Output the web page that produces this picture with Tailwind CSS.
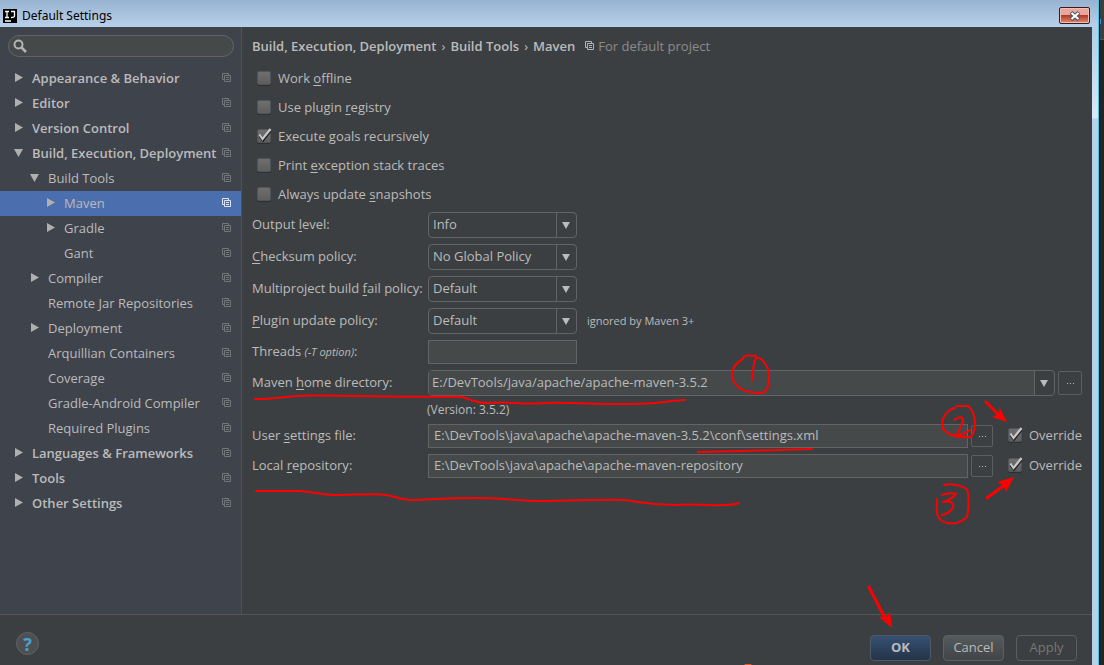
<!DOCTYPE html>
<html lang="en">
<head>
<meta charset="utf-8">
<title>Default Settings</title>
<script src="https://cdn.jsdelivr.net/npm/@tailwindcss/browser@4"></script>
</head>
<body class="flex h-screen overflow-hidden bg-[#232425] font-['Open_Sans','Noto_Sans',sans-serif] text-[13px] leading-4 text-[#bbbbbb]">
<svg class="hidden">
  <symbol id="copy" viewBox="0 0 9 9"><path d="M2.500 6.500H.5V.5H6.500V2.500M2.500 2.500H8.500V8.500H2.500ZM4 4.500H7M4 6.500H7" fill="none" stroke="currentColor"/></symbol>
  <symbol id="right" viewBox="0 0 8 9"><path d="M0 0L8 4.500L0 9Z" fill="currentColor"/></symbol>
  <symbol id="down" viewBox="0 0 9 8"><path d="M0 0H9L4.500 8Z" fill="currentColor"/></symbol>
  <symbol id="tick" viewBox="0 0 16 16"><path d="M4 8L7 12L14 3" fill="none" stroke="#222" stroke-width="3"/><path d="M3.500 6.500L6.500 11L14.500 1" fill="none" stroke="#c8c8c8" stroke-width="2.200"/></symbol>
</svg>

<div class="flex min-w-0 flex-1 flex-col">
  <header class="flex h-[27px] shrink-0 items-center bg-linear-to-b from-[#98b3d1] to-[#b8d0ea] pr-2 pl-[3px] text-black">
    <svg class="mt-1 h-3.5 w-3.5" viewBox="0 0 14 14"><path fill="#000" d="M0 0H14V14H0Z"/><path d="M2 2.500H6M4 2.500V8M2 8.500H6M8 2.500H11.500V7Q11.500 8.500 8 8.500M2 12H8" fill="none" stroke="#fff" stroke-width="1.300"/></svg>
    <h1 class="mt-1 ml-[5px] flex-1 font-['Noto_Sans',sans-serif] text-[12px]">Default Settings</h1>
    <button aria-label="Close" class="mt-1 grid h-[17px] w-[31px] place-items-center rounded-xs border border-[#3c1820] bg-linear-to-b from-[#e9a79c] from-45% via-[#b5382a] via-50% to-[#dc8b74] shadow-[inset_0_0_0_1px_#f0c0b4]">
      <svg class="h-2.5 w-3" viewBox="0 0 12 10"><path d="M2 1.500L10 8.500M10 1.500L2 8.500" stroke="#4b4f5c" stroke-width="4"/><path d="M2.500 2L9.500 8M9.500 2L2.500 8" stroke="#fff" stroke-width="2.200"/></svg>
    </button>
  </header>

  <div class="flex min-h-0 flex-1">
    <div class="flex min-w-0 flex-1 flex-col bg-[#3c3f41]">
      <div class="flex min-h-0 flex-1 border-b border-[#555555]">
        <aside class="w-[242px] shrink-0 border-r border-[#515151] bg-[#3f434c] pt-2">
          <label class="mr-[7px] mb-[9px] ml-2 flex h-[22px] items-center rounded-full border border-[#646464] bg-[#45494a] pl-1">
            <svg class="h-3.5 w-3.5 shrink-0" viewBox="0 0 14 14" fill="none" stroke="#b4b4b4"><circle cx="5.500" cy="5.500" r="4" stroke-width="2"/><path d="M8.500 8.500L13 13" stroke-width="2.500"/></svg>
            <input type="search" aria-label="Search settings" class="w-full bg-transparent px-1 outline-none">
          </label>
          <nav class="text-[#bbbbbb]">
            <a href="#" class="flex h-[25px] items-center pr-[10px] pb-0.5 pl-[15px] font-semibold"><svg class="mr-[9px] h-[9px] w-2 shrink-0 text-[#b0b0b0]"><use href="#right"/></svg><span class="flex-1">Appearance &amp; Behavior</span><svg class="h-[9px] w-[9px] text-[#72777b]"><use href="#copy"/></svg></a>
            <a href="#" class="flex h-[25px] items-center pr-[10px] pb-0.5 pl-[15px] font-semibold"><svg class="mr-[9px] h-[9px] w-2 shrink-0 text-[#b0b0b0]"><use href="#right"/></svg><span class="flex-1">Editor</span><svg class="h-[9px] w-[9px] text-[#72777b]"><use href="#copy"/></svg></a>
            <a href="#" class="flex h-[25px] items-center pr-[10px] pb-0.5 pl-[15px] font-semibold"><svg class="mr-[9px] h-[9px] w-2 shrink-0 text-[#b0b0b0]"><use href="#right"/></svg><span class="flex-1">Version Control</span><svg class="h-[9px] w-[9px] text-[#72777b]"><use href="#copy"/></svg></a>
            <a href="#" class="flex h-[25px] items-center pr-[10px] pb-0.5 pl-[14px] font-semibold"><svg class="mr-[9px] h-2 w-[9px] shrink-0 text-[#b0b0b0]"><use href="#down"/></svg><span class="flex-1 whitespace-nowrap">Build, Execution, Deployment</span><svg class="h-[9px] w-[9px] text-[#72777b]"><use href="#copy"/></svg></a>
            <a href="#" class="flex h-[25px] items-center pr-[10px] pb-0.5 pl-[30px]"><svg class="mr-[9px] h-2 w-[9px] shrink-0 text-[#b0b0b0]"><use href="#down"/></svg><span class="flex-1">Build Tools</span><svg class="h-[9px] w-[9px] text-[#72777b]"><use href="#copy"/></svg></a>
            <a href="#" aria-current="page" class="flex h-[25px] items-center bg-[#4b6eaf] pr-[10px] pb-0.5 pl-[47px]"><svg class="mr-[9px] h-[9px] w-2 shrink-0 text-[#b0b0b0]"><use href="#right"/></svg><span class="flex-1">Maven</span><svg class="h-[9px] w-[9px] text-[#dfe6ee]"><use href="#copy"/></svg></a>
            <a href="#" class="flex h-[25px] items-center pr-[10px] pb-0.5 pl-[47px]"><svg class="mr-[9px] h-[9px] w-2 shrink-0 text-[#b0b0b0]"><use href="#right"/></svg><span class="flex-1">Gradle</span><svg class="h-[9px] w-[9px] text-[#72777b]"><use href="#copy"/></svg></a>
            <a href="#" class="flex h-[25px] items-center pr-[10px] pb-0.5 pl-16"><span class="flex-1">Gant</span><svg class="h-[9px] w-[9px] text-[#72777b]"><use href="#copy"/></svg></a>
            <a href="#" class="flex h-[25px] items-center pr-[10px] pb-0.5 pl-[31px]"><svg class="mr-[9px] h-[9px] w-2 shrink-0 text-[#b0b0b0]"><use href="#right"/></svg><span class="flex-1">Compiler</span><svg class="h-[9px] w-[9px] text-[#72777b]"><use href="#copy"/></svg></a>
            <a href="#" class="flex h-[25px] items-center pr-[10px] pb-0.5 pl-12"><span class="flex-1">Remote Jar Repositories</span><svg class="h-[9px] w-[9px] text-[#72777b]"><use href="#copy"/></svg></a>
            <a href="#" class="flex h-[25px] items-center pr-[10px] pb-0.5 pl-[31px]"><svg class="mr-[9px] h-[9px] w-2 shrink-0 text-[#b0b0b0]"><use href="#right"/></svg><span class="flex-1">Deployment</span><svg class="h-[9px] w-[9px] text-[#72777b]"><use href="#copy"/></svg></a>
            <a href="#" class="flex h-[25px] items-center pr-[10px] pb-0.5 pl-12"><span class="flex-1">Arquillian Containers</span><svg class="h-[9px] w-[9px] text-[#72777b]"><use href="#copy"/></svg></a>
            <a href="#" class="flex h-[25px] items-center pr-[10px] pb-0.5 pl-12"><span class="flex-1">Coverage</span><svg class="h-[9px] w-[9px] text-[#72777b]"><use href="#copy"/></svg></a>
            <a href="#" class="flex h-[25px] items-center pr-[10px] pb-0.5 pl-12"><span class="flex-1">Gradle-Android Compiler</span><svg class="h-[9px] w-[9px] text-[#72777b]"><use href="#copy"/></svg></a>
            <a href="#" class="flex h-[25px] items-center pr-[10px] pb-0.5 pl-12"><span class="flex-1">Required Plugins</span><svg class="h-[9px] w-[9px] text-[#72777b]"><use href="#copy"/></svg></a>
            <a href="#" class="flex h-[25px] items-center pr-[10px] pb-0.5 pl-[15px] font-semibold"><svg class="mr-[9px] h-[9px] w-2 shrink-0 text-[#b0b0b0]"><use href="#right"/></svg><span class="flex-1">Languages &amp; Frameworks</span><svg class="h-[9px] w-[9px] text-[#72777b]"><use href="#copy"/></svg></a>
            <a href="#" class="flex h-[25px] items-center pr-[10px] pb-0.5 pl-[15px] font-semibold"><svg class="mr-[9px] h-[9px] w-2 shrink-0 text-[#b0b0b0]"><use href="#right"/></svg><span class="flex-1">Tools</span><svg class="h-[9px] w-[9px] text-[#72777b]"><use href="#copy"/></svg></a>
            <a href="#" class="flex h-[25px] items-center pr-[10px] pb-0.5 pl-[15px] font-semibold"><svg class="mr-[9px] h-[9px] w-2 shrink-0 text-[#b0b0b0]"><use href="#right"/></svg><span class="flex-1">Other Settings</span><svg class="h-[9px] w-[9px] text-[#72777b]"><use href="#copy"/></svg></a>
          </nav>
        </aside>

        <main class="min-w-0 flex-1 px-[10px]">
          <div class="flex h-9 items-center pt-px whitespace-nowrap">
            <h2 class="flex gap-[5px] font-semibold"><span>Build, Execution, Deployment</span><span class="font-normal">›</span><span>Build Tools</span><span class="font-normal">›</span><span>Maven</span></h2>
            <svg class="mr-1 ml-2.5 h-[9px] w-[9px] text-[#b0b4b6]"><use href="#copy"/></svg>
            <span class="text-[#8c8c8c]">For default project</span>
          </div>

          <div class="flex flex-col items-start pl-1">
            <label class="flex h-[29px] items-center gap-1.5"><span class="grid h-4 w-4 place-items-center"><input type="checkbox" class="h-3.5 w-3.5 appearance-none rounded-xs border border-[#525557] bg-linear-to-b from-[#6e6e6e] to-[#5e5e5e] shadow-[0_1px_0_#2c2e2f]"></span><span>Work <u class="underline-offset-2">o</u>ffline</span></label>
            <label class="flex h-[29px] items-center gap-1.5"><span class="grid h-4 w-4 place-items-center"><input type="checkbox" class="h-3.5 w-3.5 appearance-none rounded-xs border border-[#525557] bg-linear-to-b from-[#6e6e6e] to-[#5e5e5e] shadow-[0_1px_0_#2c2e2f]"></span><span>Use plugin <u class="underline-offset-2">r</u>egistry</span></label>
            <label class="flex h-[29px] items-center gap-1.5"><span class="grid h-4 w-4 place-items-center"><input type="checkbox" checked class="peer col-start-1 row-start-1 h-3.5 w-3.5 appearance-none rounded-xs border border-[#525557] bg-linear-to-b from-[#6e6e6e] to-[#5e5e5e] shadow-[0_1px_0_#2c2e2f]"><svg class="pointer-events-none invisible col-start-1 row-start-1 h-4 w-4 peer-checked:visible"><use href="#tick"/></svg></span><span>Execute <u class="underline-offset-2">g</u>oals recursively</span></label>
            <label class="flex h-[29px] items-center gap-1.5"><span class="grid h-4 w-4 place-items-center"><input type="checkbox" class="h-3.5 w-3.5 appearance-none rounded-xs border border-[#525557] bg-linear-to-b from-[#6e6e6e] to-[#5e5e5e] shadow-[0_1px_0_#2c2e2f]"></span><span>Print <u class="underline-offset-2">e</u>xception stack traces</span></label>
            <label class="flex h-[29px] items-center gap-1.5"><span class="grid h-4 w-4 place-items-center"><input type="checkbox" class="h-3.5 w-3.5 appearance-none rounded-xs border border-[#525557] bg-linear-to-b from-[#6e6e6e] to-[#5e5e5e] shadow-[0_1px_0_#2c2e2f]"></span><span>Always update <u class="underline-offset-2">s</u>napshots</span></label>
          </div>

          <div class="mt-1 grid grid-cols-[176px_minmax(0,1fr)] items-center gap-y-1.5 whitespace-nowrap [&_input]:pb-0.5 [&_select]:pb-0.5 [&>label]:pb-0.5">
            <label for="level">Output <u class="underline-offset-2">l</u>evel:</label>
            <div class="flex h-[26px] w-[149px] items-stretch rounded-sm border border-[#646464]">
              <select id="level" class="w-[127px] appearance-none pl-1 outline-none"><option>Info</option></select><span class="grid flex-1 place-items-center border-l border-[#646464] pr-px"><svg class="h-[7px] w-2"><use href="#down"/></svg></span>
            </div>
            <label for="checksum"><u class="underline-offset-2">C</u>hecksum policy:</label>
            <div class="flex h-[26px] w-[149px] items-stretch rounded-sm border border-[#646464]">
              <select id="checksum" class="w-[127px] appearance-none pl-1 outline-none"><option>No Global Policy</option></select><span class="grid flex-1 place-items-center border-l border-[#646464] pr-px"><svg class="h-[7px] w-2"><use href="#down"/></svg></span>
            </div>
            <label for="fail">Multiproject build <u class="underline-offset-2">f</u>ail policy:</label>
            <div class="flex h-[26px] w-[149px] items-stretch rounded-sm border border-[#646464]">
              <select id="fail" class="w-[127px] appearance-none pl-1 outline-none"><option>Default</option></select><span class="grid flex-1 place-items-center border-l border-[#646464] pr-px"><svg class="h-[7px] w-2"><use href="#down"/></svg></span>
            </div>
            <label for="plugin"><u class="underline-offset-2">P</u>lugin update policy:</label>
            <div class="flex items-center gap-2.5">
              <div class="flex h-[26px] w-[149px] items-stretch rounded-sm border border-[#646464]">
                <select id="plugin" class="w-[127px] appearance-none pl-1 outline-none"><option>Default</option></select><span class="grid flex-1 place-items-center border-l border-[#646464] pr-px"><svg class="h-[7px] w-2"><use href="#down"/></svg></span>
              </div>
              <span class="text-[11px]">ignored by Maven 3+</span>
            </div>
            <label for="threads">Threads <i class="text-[11px]">(-T option)</i>:</label>
            <input id="threads" type="text" class="h-6 w-[149px] border border-[#646464] bg-[#45494a] px-1 outline-none">
            <label for="home">Maven <u class="underline-offset-2">h</u>ome directory:</label>
            <div class="flex items-center gap-[3px]">
              <div class="flex h-[26px] min-w-0 flex-1 items-stretch rounded-sm border border-[#646464]">
                <input id="home" type="text" value="E:/DevTools/java/apache/apache-maven-3.5.2" class="min-w-0 flex-1 bg-[#45494a] px-[3px] outline-none"><button aria-label="Show recent directories" class="grid w-5 place-items-center border-l border-[#646464] pr-px"><svg class="h-[7px] w-2"><use href="#down"/></svg></button>
              </div>
              <button aria-label="Browse home directory" class="grid h-6 w-6 place-items-center rounded-xs border border-[#5c5e5f]"><svg class="h-px w-[7px]" fill="#bbb"><path d="M0 0H1V1H0ZM3 0H4V1H3ZM6 0H7V1H6Z"/></svg></button>
            </div>
          </div>
          <p class="flex h-7 items-center pl-[175px] text-[12px]">(Version: 3.5.2)</p>
          <div class="grid grid-cols-[176px_minmax(0,1fr)_auto_auto] items-center gap-y-1.5 whitespace-nowrap [&>input]:pb-0.5 [&>label]:pb-0.5">
            <label for="user">User <u class="underline-offset-2">s</u>ettings file:</label>
            <input id="user" type="text" value="E:\DevTools\java\apache\apache-maven-3.5.2\conf\settings.xml" class="h-6 min-w-0 border border-[#646464] bg-[#45494a] px-[5px] outline-none">
            <button aria-label="Browse settings file" class="ml-[3px] grid h-[22px] w-[22px] place-items-center rounded-xs border border-[#5c5e5f]"><svg class="h-px w-[7px]" fill="#bbb"><path d="M0 0H1V1H0ZM3 0H4V1H3ZM6 0H7V1H6Z"/></svg></button>
            <label class="ml-3.5 flex w-[75px] items-center gap-1.5"><span class="grid h-4 w-4 shrink-0 place-items-center"><input type="checkbox" checked class="peer col-start-1 row-start-1 h-3.5 w-3.5 appearance-none rounded-xs border border-[#525557] bg-linear-to-b from-[#6e6e6e] to-[#5e5e5e] shadow-[0_1px_0_#2c2e2f]"><svg class="pointer-events-none invisible col-start-1 row-start-1 h-4 w-4 peer-checked:visible"><use href="#tick"/></svg></span><span>Override</span></label>
            <label for="repo">Local <u class="underline-offset-2">r</u>epository:</label>
            <input id="repo" type="text" value="E:\DevTools\java\apache\apache-maven-repository" class="h-6 min-w-0 border border-[#646464] bg-[#45494a] px-[5px] outline-none">
            <button aria-label="Browse repository" class="ml-[3px] grid h-[22px] w-[22px] place-items-center rounded-xs border border-[#5c5e5f]"><svg class="h-px w-[7px]" fill="#bbb"><path d="M0 0H1V1H0ZM3 0H4V1H3ZM6 0H7V1H6Z"/></svg></button>
            <label class="ml-3.5 flex w-[75px] items-center gap-1.5"><span class="grid h-4 w-4 shrink-0 place-items-center"><input type="checkbox" checked class="peer col-start-1 row-start-1 h-3.5 w-3.5 appearance-none rounded-xs border border-[#525557] bg-linear-to-b from-[#6e6e6e] to-[#5e5e5e] shadow-[0_1px_0_#2c2e2f]"><svg class="pointer-events-none invisible col-start-1 row-start-1 h-4 w-4 peer-checked:visible"><use href="#tick"/></svg></span><span>Override</span></label>
          </div>
        </main>
      </div>

      <footer class="flex h-[50px] shrink-0 items-end gap-3 pr-[15px] pb-1 pl-4">
        <button aria-label="Help" class="mr-auto mb-1.5 grid h-[23px] w-[23px] place-items-center rounded-full border border-[#616465] bg-[#4c5052] font-['Noto_Sans',sans-serif] text-[18px] font-bold text-[#4a9fd0]">?</button>
        <button class="h-[26px] w-[61px] rounded-sm border border-[#4f5a66] bg-linear-to-b from-[#365073] to-[#243449] pb-0.5 font-bold">OK</button>
        <button class="h-[26px] w-[61px] rounded-sm border border-[#5e6060] bg-linear-to-b from-[#555a5c] to-[#414547] pb-0.5">Cancel</button>
        <button disabled class="h-[26px] w-[61px] rounded-sm border border-[#5c5e5f] pb-0.5 text-[#777777]">Apply</button>
      </footer>
    </div>
    <div class="w-1.5 bg-linear-to-b from-[#b3cde8] via-[#dbe8f6] via-[91px] to-[#b8d0ea] to-[92px]"></div>
  </div>
</div>
<div class="w-px bg-[#28d0f0]"></div>
<div class="flex w-[5px] flex-col border-l border-black">
  <div class="h-10 border-b border-[#555] bg-[#3c3f41] pt-[19px]"><div class="h-[5px] w-px bg-[#4a90d0]"></div></div>
</div>

<!-- Hand-drawn notes over the dialog -->
<svg class="pointer-events-none absolute top-0 left-0" width="1104" height="665" viewBox="0 0 1104 665" fill="none" stroke="#ff0000" stroke-width="2" stroke-linecap="round" stroke-linejoin="round">
  <path d="M255 399C275 399 285 396 310 395.500C350 395 420 398 459 396.500C469 398 474 403 487 403C510 401 520 405 545 403C580 402 615 406 655 403C667 402 674 400 685 400"/>
  <path d="M698 452L740 451L812 449"/>
  <path d="M256 491H300C315 492 320 495 335 495C360 495 380 492 395 497C412 503 425 498 475 498C505 498 520 501 540 501C575 501 595 499 625 500C645 503 650 505 675 505C705 503 725 508 739 503"/>
  <path d="M756 356C747 355 743 355 743 359C733 364 729 375 734 382C739 390 748 393 760 393C771 393 769 376 768 369C765 361 760 357 756 358C753 363 753 373 752 380"/>
  <path d="M955 408C946 410 940 420 943 429C950 437 960 438 971 437C978 427 975 411 968 406H956M954 420Q963 414 963 421Q960 431 955 436Q964 435 970 430"/>
  <path d="M944 485C950 483 960 485 967 489C969 496 969 510 967 517C961 523 951 526 942 521C935 516 937 509 937 499M942 495Q949 492 956 494Q951 500 943 502Q955 500 953 508Q948 514 942 515"/>
  <path d="M986 402L999 415M987 498L1003 486M869 587L885 618" stroke-width="3"/>
  <path d="M1007 422L992 417L998 414L1000 408ZM1014 477L997 482L1003 485L1006 492ZM892 628L879 617L886 617L890 612Z" fill="#ff0000" stroke="none"/>
  <path d="M745 664.500H751" stroke="#e65a25" stroke-width="1"/>
</svg>
</body>
</html>
